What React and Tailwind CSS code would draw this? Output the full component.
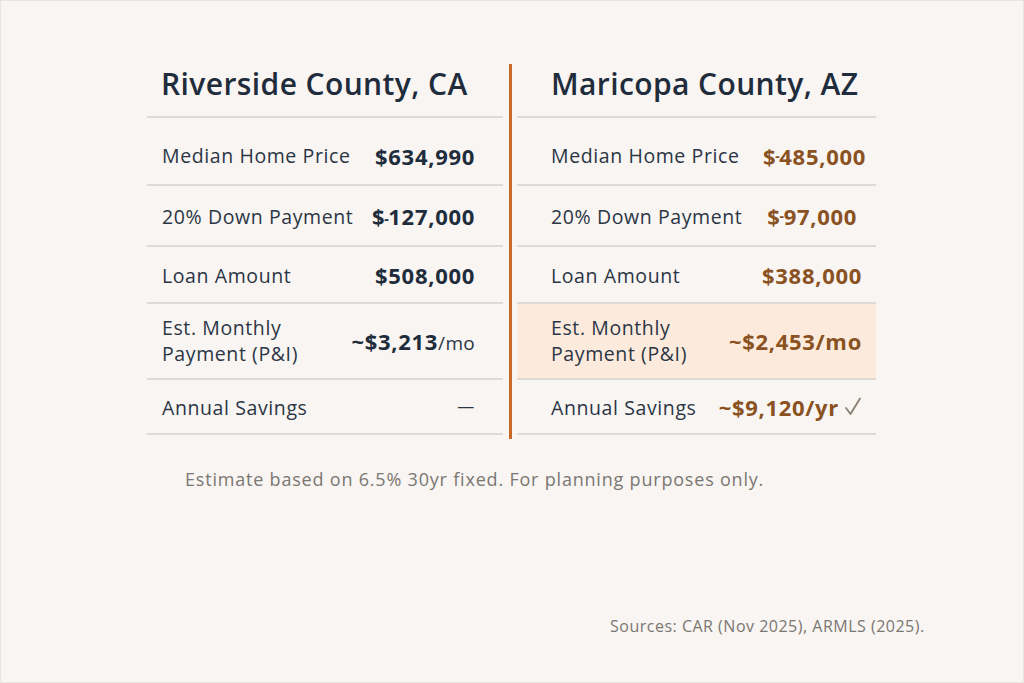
import React from 'react';

const Tick = () => <span className="text-[14px] mx-[-1px] relative -top-[1px]">‐</span>;

const rows = [
  { label: 'Median Home Price', ca: <>$634,990</>, az: <>$<Tick />485,000</>, h: 'h-[68px]', pt: 'pt-[10px]', azPr: 'pr-[10px]' },
  { label: '20% Down Payment', ca: <>$<Tick />127,000</>, az: <>$<Tick />97,000</>, h: 'h-[61px]', pt: 'pt-[2px]', azPr: 'pr-[19px]' },
  { label: 'Loan Amount', ca: <>$508,000</>, az: <>$388,000</>, h: 'h-[57px]', pt: 'pt-[2px]' },
  { label: 'Est. Monthly Payment (P&I)', ca: <>~$3,213</>, az: <>~$2,453</>, unit: '/mo', h: 'h-[76px]', pt: 'pt-0', highlight: true },
  { label: 'Annual Savings', ca: null, az: <>~$9,120/yr</>, check: true, h: 'h-[55px]', pt: 'pt-[2px]' },
];

function Label({ text }) {
  if (text.startsWith('Est.')) {
    return (
      <div className="leading-[26px]">
        Est. Monthly
        <br />
        Payment (P&amp;I)
      </div>
    );
  }
  return <div>{text}</div>;
}

function Check() {
  return (
    <svg width="18" height="19" viewBox="0 0 18 19" className="ml-[5px] -mt-[2px]">
      <polyline
        points="2,11 6.5,17 16,1.5"
        fill="none"
        stroke="#8c7f72"
        strokeWidth="1.8"
        strokeLinecap="round"
        strokeLinejoin="round"
      />
    </svg>
  );
}

export default function App() {
  return (
    <div
      className="w-[1024px] h-[683px] bg-[#f8f5f2] border border-[#e8e4e0] overflow-hidden"
      style={{ fontFamily: '"Open Sans", "Noto Sans", sans-serif' }}
    >
      <div className="pt-[63px] pl-[146px]">
        <div className="grid grid-cols-[356px_14px_359px]">
          {/* Riverside */}
          <div>
            <div className="h-[54px] flex items-end pb-[10px] pl-[14px] border-b-2 border-[#dedad6]">
              <h1 className="text-[30px] font-semibold text-[#1f2c3c] tracking-[0.4px]">Riverside County, CA</h1>
            </div>
            {rows.map((r) => (
              <div
                key={r.label}
                className={`${r.h} ${r.pt} flex items-center justify-between pl-[15px] pr-[28px] border-b-2 border-[#dedad6] text-[19.5px] tracking-[0.6px] text-[#2b3545]`}
              >
                <Label text={r.label} />
                <div className="font-bold text-[22px] tracking-[0.7px] text-[#1f2c3c]">
                  {r.ca === null ? (
                    <span className="font-normal text-[17px] text-[#2b3545] relative -top-[4px]">—</span>
                  ) : (
                    r.ca
                  )}
                  {r.unit && <span className="font-normal text-[19px] tracking-[0.3px] text-[#2b3545]">{r.unit}</span>}
                </div>
              </div>
            ))}
          </div>

          {/* divider */}
          <div className="flex justify-center pl-[1px]">
            <div className="w-[3px] h-[375px] bg-[#c8692a]" />
          </div>

          {/* Maricopa */}
          <div>
            <div className="h-[54px] flex items-end pb-[10px] pl-[34px] border-b-2 border-[#dedad6]">
              <h1 className="text-[30px] font-semibold text-[#1f2c3c] tracking-[0.4px]">Maricopa County, AZ</h1>
            </div>
            {rows.map((r) => (
              <div
                key={r.label}
                className={`${r.h} ${r.pt} flex items-center justify-between pl-[34px] ${r.azPr || 'pr-[14px]'} border-b-2 border-[#dedad6] text-[19.5px] tracking-[0.6px] text-[#2b3545] ${r.highlight ? 'bg-[#fcebdc]' : ''}`}
              >
                <Label text={r.label} />
                <div className="font-bold text-[22px] tracking-[0.7px] text-[#8a5222] flex items-center">
                  {r.az}
                  {r.unit && <span>{r.unit}</span>}
                  {r.check && <Check />}
                </div>
              </div>
            ))}
          </div>
        </div>

        <p className="mt-[27px] ml-[38px] text-[18px] tracking-[0.8px] text-[#7b7773]">
          Estimate based on 6.5% 30yr fixed. For planning purposes only.
        </p>
      </div>

      <div className="mt-[121px] ml-[609px] text-[16px] tracking-[0.5px] text-[#7b7773]">
        Sources: CAR (Nov 2025), ARMLS (2025).
      </div>
    </div>
  );
}
